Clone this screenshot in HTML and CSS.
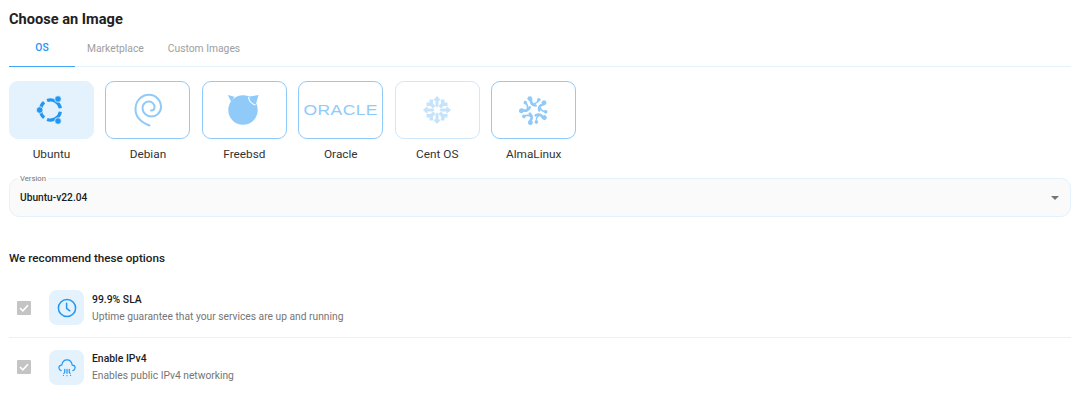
FILE: index.html
```html
<!DOCTYPE html>
<html lang="en">
<head>
<meta charset="utf-8">
<title>Choose an Image</title>
<link rel="stylesheet" href="styles.css">
</head>
<body>
<main class="page">
  <h1 class="title">Choose an Image</h1>
  <nav class="tabs">
    <span class="tab tab-active">OS</span>
    <span class="tab">Marketplace</span>
    <span class="tab">Custom Images</span>
  </nav>

  <div class="images">
    <div class="image">
      <div class="card card-active">
        <svg class="logo" width="34" height="34" viewBox="0 0 34 34">
          <g fill="none" stroke="#2196f3" stroke-width="3.2">
            <path d="M25.35 18.74A10 10 0 0 1 12.08 26.4"/>
            <path d="M9.07 24.66A10 10 0 0 1 9.07 9.34"/>
            <path d="M12.08 7.6A10 10 0 0 1 25.35 15.26"/>
          </g>
          <g fill="#2196f3" stroke="#e3f2fd" stroke-width="0.8">
            <circle cx="23" cy="6" r="3.3"/>
            <circle cx="4.7" cy="17" r="3.3"/>
            <circle cx="23" cy="28" r="3.3"/>
          </g>
        </svg>
      </div>
      <span class="label">Ubuntu</span>
    </div>
    <div class="image">
      <div class="card">
        <svg class="logo" width="34" height="34" viewBox="0 0 34 34">
          <path d="M18.5 32.5C9 29 4.500 23 4.500 16C4.500 8 10.500 1.800 18 1.800C25 1.800 30 7.500 30 14C30 20 25 23.500 20.500 23.500C15.500 23.500 11.500 19.500 11.500 15C11.500 11 14.500 8.500 18 8.500C21 8.500 23.500 11 23.500 14C23.500 16 22 17.500 20 17.500" fill="none" stroke="#90caf9" stroke-width="2" stroke-linecap="round"/>
        </svg>
      </div>
      <span class="label">Debian</span>
    </div>
    <div class="image">
      <div class="card">
        <svg class="logo" width="40" height="36" viewBox="0 0 40 36">
          <circle cx="19" cy="18" r="14.700" fill="#90caf9"/>
          <path d="M3.800 3L10.500 4.700L7.200 9.700Z" fill="#90caf9"/>
          <path d="M34.500 3L24 4.700L31.500 13.700Z" fill="#90caf9"/>
          <path d="M24.500 5C25 9 28 12 31.500 13" fill="none" stroke="#fff" stroke-width="1.200"/>
        </svg>
      </div>
      <span class="label">Freebsd</span>
    </div>
    <div class="image">
      <div class="card">
        <span class="oracle">ORACLE</span>
      </div>
      <span class="label">Oracle</span>
    </div>
    <div class="image">
      <div class="card card-faint">
        <svg class="logo" width="30" height="30" viewBox="0 0 30 30">
          <defs>
            <g id="centos-arm" fill="#c5e3fb">
              <path d="M15 1L19 5.500H16.500V11L15 12.500L13.500 11V5.500H11Z"/>
              <path d="M7.500 4.500H11V8.500L13.500 11L11 13.500L8.500 11H4.500V7.500H7.500Z"/>
            </g>
          </defs>
          <use href="#centos-arm"/>
          <use href="#centos-arm" transform="rotate(90 15 15)"/>
          <use href="#centos-arm" transform="rotate(180 15 15)"/>
          <use href="#centos-arm" transform="rotate(270 15 15)"/>
        </svg>
      </div>
      <span class="label">Cent OS</span>
    </div>
    <div class="image">
      <div class="card">
        <svg class="logo" width="30" height="30" viewBox="0 0 30 30">
          <defs>
            <g id="alma-petal">
              <path d="M16.500 10.500C13 10 11.500 8 12 4.500" fill="none" stroke="#90caf9" stroke-width="2.700" stroke-linecap="round"/>
              <path d="M14 9C16.500 8.500 18.500 7.500 19.500 5.500" fill="none" stroke="#90caf9" stroke-width="1.600"/>
              <circle cx="10.800" cy="3.600" r="2.400" fill="#90caf9"/>
              <circle cx="19.800" cy="4.800" r="1.800" fill="#90caf9"/>
            </g>
          </defs>
          <use href="#alma-petal"/>
          <use href="#alma-petal" transform="rotate(72 15 15.500)"/>
          <use href="#alma-petal" transform="rotate(144 15 15.500)"/>
          <use href="#alma-petal" transform="rotate(216 15 15.500)"/>
          <use href="#alma-petal" transform="rotate(288 15 15.500)"/>
        </svg>
      </div>
      <span class="label">AlmaLinux</span>
    </div>
  </div>

  <div class="select">
    <span class="select-legend">Version</span>
    <span class="select-value">Ubuntu-v22.04</span>
    <span class="select-arrow"></span>
  </div>

  <h2 class="subtitle">We recommend these options</h2>

  <div class="options">
    <div class="option">
      <span class="check">
        <svg width="10" height="8" viewBox="0 0 10 8"><path d="M1 4L3.800 6.800L9 1.200" fill="none" stroke="#fff" stroke-width="1.600"/></svg>
      </span>
      <span class="option-icon">
        <svg width="20" height="20" viewBox="0 0 20 20" fill="none" stroke="#2196f3" stroke-width="1.500" stroke-linecap="round" stroke-linejoin="round">
          <circle cx="10" cy="10" r="8.600"/>
          <path d="M9.600 5.200V10.400L12.800 12.800"/>
        </svg>
      </span>
      <div class="option-text">
        <span class="option-title">99.9% SLA</span>
        <span class="option-desc">Uptime guarantee that your services are up and running</span>
      </div>
    </div>
    <div class="option">
      <span class="check">
        <svg width="10" height="8" viewBox="0 0 10 8"><path d="M1 4L3.800 6.800L9 1.200" fill="none" stroke="#fff" stroke-width="1.600"/></svg>
      </span>
      <span class="option-icon">
        <svg width="18" height="19" viewBox="0 0 20 20" fill="none" stroke="#2196f3" stroke-width="1.300" stroke-linecap="round" stroke-linejoin="round">
          <path d="M3.500 13.500C1.500 12.800 1 11.500 1 10.300C1 8.500 2.500 7.200 4.200 7.300C4.800 3.500 7.300 1.500 10 1.500C13 1.500 15.300 3.800 15.800 7.300C17.700 7.300 19 8.600 19 10.300C19 11.500 18.300 12.800 16.500 13.500"/>
          <path d="M7.500 12V15.500L6.500 16.500M10 12V16.500M12.500 12V15.500L13.500 16.500"/>
          <path d="M6 18.800V18.900M10 19V19.100M14 18.800V18.900"/>
        </svg>
      </span>
      <div class="option-text">
        <span class="option-title">Enable IPv4</span>
        <span class="option-desc">Enables public IPv4 networking</span>
      </div>
    </div>
  </div>
</main>
</body>
</html>
```

FILE: styles.css
```css
* { box-sizing: border-box; }

html, body {
  margin: 0;
  height: 400px;
  overflow: hidden;
  background: #fff;
}

body {
  font-family: Roboto, "Liberation Sans", sans-serif;
  color: #1c1c1c;
}

.page {
  padding: 10px 9px 0;
  display: flex;
  flex-direction: column;
}

.title {
  margin: 0;
  font-size: 14.600px;
  line-height: 19px;
  font-weight: 700;
  color: #212121;
}

.tabs {
  display: flex;
  height: 38px;
  border-bottom: 1px solid #e3f2fd;
}

.tab {
  height: 38px;
  padding: 0 12px;
  display: flex;
  align-items: center;
  justify-content: center;
  font-size: 10.300px;
  font-weight: 400;
  color: #9e9e9e;
}

.tab-active {
  width: 66px;
  color: #2196f3;
  font-weight: 500;
  border-bottom: 1px solid #42a5f5;
}

.images {
  display: flex;
  gap: 11.450px;
  margin-top: 14px;
}

.image {
  display: flex;
  flex-direction: column;
  align-items: center;
  gap: 7px;
}

.card {
  width: 85px;
  height: 58px;
  border: 1px solid #90caf9;
  border-radius: 9px;
  display: flex;
  align-items: center;
  justify-content: center;
}

.card-active {
  background: #e3f2fd;
  border-color: #e3f2fd;
}

.card-faint {
  border-color: #cfe8fc;
}

.logo {
  display: block;
}

.oracle {
  font-family: "Liberation Sans", sans-serif;
  font-size: 14px;
  line-height: 1;
  letter-spacing: 0.300px;
  transform: scaleX(1.250);
  color: #90caf9;
}

.label {
  font-size: 11.800px;
  line-height: 17px;
  color: #333;
}

.select {
  position: relative;
  margin-top: 15px;
  padding: 0 11px 0 10px;
  height: 39px;
  border: 1px solid #e3f2fd;
  border-radius: 10px;
  background: #fafafa;
  display: flex;
  align-items: center;
  justify-content: space-between;
}

.select-legend {
  position: absolute;
  top: -5px;
  left: 8px;
  padding: 0 2px;
  font-size: 7.700px;
  line-height: 9px;
  color: #757575;
  background: linear-gradient(#fff 5px, #fafafa 5px);
}

.select-value {
  font-size: 10.200px;
  font-weight: 500;
  color: #1c1c1c;
}

.select-arrow {
  width: 0;
  height: 0;
  border-left: 4px solid transparent;
  border-right: 4px solid transparent;
  border-top: 4px solid #757575;
}

.subtitle {
  margin: 33px 0 0;
  font-size: 11.700px;
  line-height: 16px;
  font-weight: 500;
  color: #212121;
}

.options {
  margin-top: 12px;
  display: flex;
  flex-direction: column;
}

.option {
  display: flex;
  align-items: center;
  height: 59px;
  padding-left: 8px;
}

.option + .option {
  border-top: 1px solid #e3f2fd;
}

.check {
  width: 14px;
  height: 14px;
  margin-right: 18px;
  border-radius: 1px;
  background: #c4c4c4;
  display: flex;
  align-items: center;
  justify-content: center;
  flex: none;
}

.option-icon {
  width: 35px;
  height: 35px;
  margin-right: 8px;
  border-radius: 8px;
  background: #e3f2fd;
  display: flex;
  align-items: center;
  justify-content: center;
  flex: none;
}

.option-text {
  display: flex;
  flex-direction: column;
  gap: 4px;
}

.option-title {
  font-size: 10.400px;
  line-height: 13px;
  font-weight: 500;
  color: #1c1c1c;
}

.option-desc {
  font-size: 10.250px;
  line-height: 13px;
  color: #757575;
}
```
